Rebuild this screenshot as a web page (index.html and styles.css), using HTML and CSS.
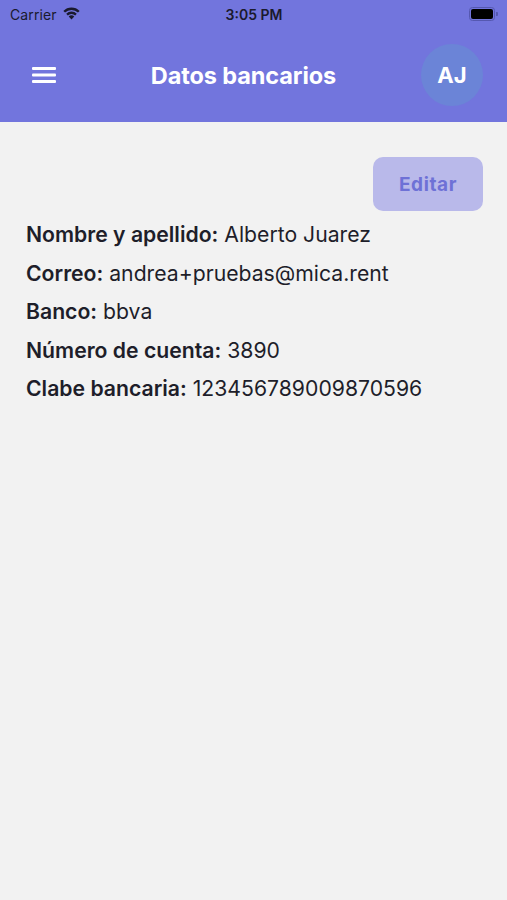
FILE: index.html
```html
<!DOCTYPE html>
<html lang="es">
<head>
<meta charset="utf-8">
<title>Datos bancarios</title>
<link rel="stylesheet" href="styles.css">
</head>
<body>
<header class="top">
  <div class="status">
    <div class="status-left">
      <span class="carrier">Carrier</span>
      <svg class="wifi" width="19" height="14" viewBox="0 0 18 13">
        <path d="M9 12.6 L6.4 9.8 A3.6 3.6 0 0 1 11.6 9.8 Z" fill="#1a1a2e"/>
        <path d="M4 7.2 A7 7 0 0 1 14 7.2 L12.5 8.8 A4.9 4.9 0 0 0 5.5 8.8 Z" fill="#1a1a2e"/>
        <path d="M1.3 4.5 A10.8 10.8 0 0 1 16.7 4.5 L15.1 6.1 A8.6 8.6 0 0 0 2.9 6.1 Z" fill="#1a1a2e"/>
      </svg>
    </div>
    <span class="time">3:05 PM</span>
    <div class="status-right">
      <div class="battery"><div class="battery-fill"></div></div>
      <div class="battery-tip"></div>
    </div>
  </div>
  <div class="navbar">
    <svg class="menu" width="24" height="18" viewBox="0 0 24 18">
      <rect x="0" y="1" width="24" height="3" rx="1" fill="#fff"/>
      <rect x="0" y="7.5" width="24" height="3" rx="1" fill="#fff"/>
      <rect x="0" y="14" width="24" height="3" rx="1" fill="#fff"/>
    </svg>
    <h1 class="title">Datos bancarios</h1>
    <div class="avatar">AJ</div>
  </div>
</header>
<main class="content">
  <div class="actions">
    <button class="edit">Editar</button>
  </div>
  <ul class="info">
    <li><b>Nombre y apellido:</b> Alberto Juarez</li>
    <li><b>Correo:</b> andrea+pruebas@mica.rent</li>
    <li><b>Banco:</b> bbva</li>
    <li><b>Número de cuenta:</b> 3890</li>
    <li><b>Clabe bancaria:</b> 123456789009870596</li>
  </ul>
</main>
</body>
</html>
```

FILE: styles.css
```css
html, body {
  margin: 0;
  padding: 0;
}
body {
  width: 507px;
  height: 900px;
  background: #f2f2f2;
  font-family: Inter, "Noto Sans", "Liberation Sans", sans-serif;
  color: #1c1c28;
  overflow: hidden;
}
.top {
  background: #7275dd;
  height: 122px;
  display: flex;
  flex-direction: column;
}
.status {
  height: 28px;
  display: flex;
  align-items: center;
  justify-content: space-between;
  padding: 0 9px 0 10px;
}
.status-left {
  display: flex;
  align-items: center;
  gap: 5px;
  width: 120px;
}
.carrier {
  font-size: 14px;
  color: #1a1a2e;
  letter-spacing: 0.1px;
}
.wifi {
  margin-top: -3px;
}
.time {
  font-size: 14px;
  font-weight: 600;
  color: #1a1a2e;
}
.status-right {
  width: 120px;
  display: flex;
  justify-content: flex-end;
  align-items: center;
}
.battery {
  width: 22px;
  height: 10px;
  border: 1.5px solid #5558b0;
  border-radius: 3.5px;
  padding: 1px;
  box-sizing: content-box;
}
.battery-fill {
  width: 100%;
  height: 100%;
  background: #000;
  border-radius: 2px;
}
.battery-tip {
  width: 2px;
  height: 4px;
  background: #5558b0;
  border-radius: 0 1px 1px 0;
  margin-left: 1px;
}
.navbar {
  flex: 1;
  display: flex;
  align-items: center;
  justify-content: space-between;
  padding: 0 24px 0 32px;
}
.menu {
  display: block;
}
.title {
  margin: 0 0 0 10px;
  font-size: 23.5px;
  font-weight: 700;
  color: #fff;
  letter-spacing: -0.1px;
}
.avatar {
  width: 62px;
  height: 62px;
  border-radius: 50%;
  background: #6b84d7;
  color: #fff;
  font-weight: 700;
  font-size: 22px;
  display: flex;
  align-items: center;
  justify-content: center;
}
.content {
  padding: 35px 24px 0 26px;
}
.actions {
  display: flex;
  justify-content: flex-end;
}
.edit {
  width: 110px;
  height: 54px;
  border: none;
  border-radius: 10px;
  background: #b9b9ea;
  color: #6e71d6;
  font-family: Inter, "Noto Sans", sans-serif;
  font-size: 19px;
  font-weight: 700;
  letter-spacing: 0.6px;
  padding: 0;
}
.info {
  list-style: none;
  margin: 4px 0 0;
  padding: 0;
}
.info li {
  font-size: 21.2px;
  line-height: 38.6px;
  color: #1e1e2a;
}
.info b {
  font-weight: 600;
}
```
